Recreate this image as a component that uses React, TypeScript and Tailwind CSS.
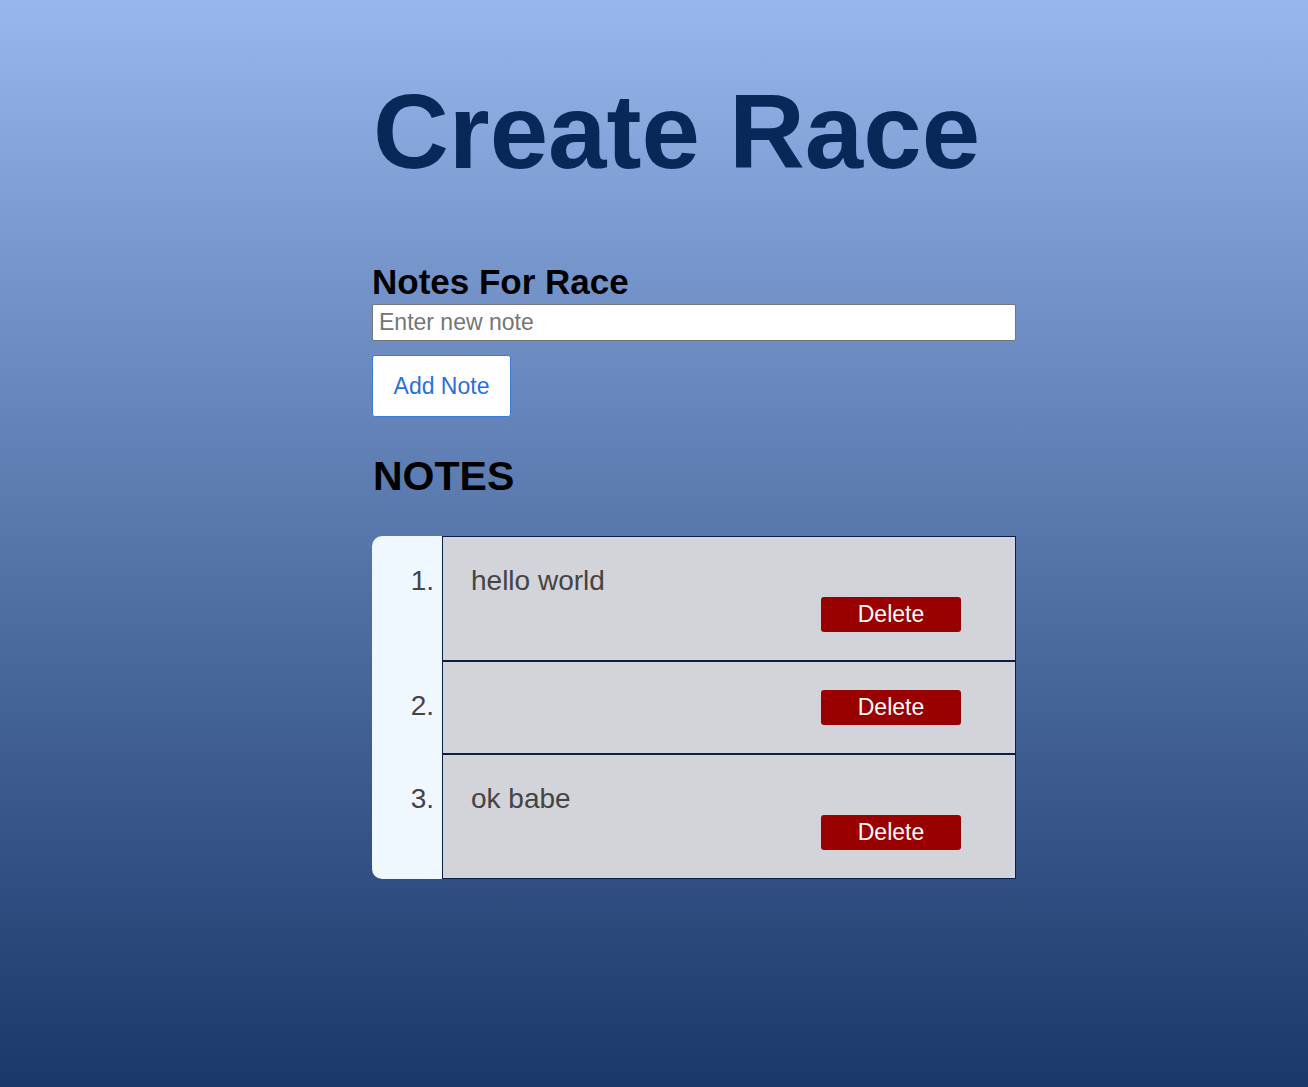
const notes = ["hello world", "", "ok babe"];

export default function App() {
  return (
    <main className="min-h-screen bg-linear-to-b from-[#97b7ed] to-[#1b386a] font-['Liberation_Sans',Arial,sans-serif]">
      <div className="ml-[372px] w-[644px] pt-[79px] pb-10">
        <h1 className="text-[105px] leading-none font-bold text-[#08285a] pl-[1px]">Create Race</h1>

        <h2 className="mt-[80px] text-[35px] leading-none font-bold text-black">Notes For Race</h2>
        <input
          type="text"
          placeholder="Enter new note"
          className="mt-[5px] block h-[37px] w-full rounded-[2px] border border-[#767676] bg-white px-[6px] text-[23px] text-black placeholder:text-[#757575] outline-none"
        />
        <button className="mt-[14px] block h-[62px] w-[139px] rounded-[3px] border border-[#3a7ad9] bg-white text-[23px] text-[#2b6fd7]">
          Add Note
        </button>

        <h2 className="mt-[39px] pl-[1px] text-[41px] leading-none font-bold text-black">NOTES</h2>

        <ol className="mt-[39px] rounded-[10px] bg-[#f0f8ff] text-[28px] text-[#444]">
          {notes.map((note, i) => (
            <li key={i} className="flex">
              <div className="w-[70px] shrink-0 pr-[8px] pt-[29px] text-right leading-[32px]">{i + 1}.</div>
              <div className="flex-1 border border-[#0b1e45] bg-[#d3d4d9] px-[28px] py-[28px]">
                {note && <div className="leading-[32px]">{note}</div>}
                <div className="flex justify-end pr-[26px]">
                  <button className="h-[35px] w-[140px] rounded-[3px] bg-[#990000] text-[23px] leading-none text-white">
                    Delete
                  </button>
                </div>
              </div>
            </li>
          ))}
        </ol>
      </div>
    </main>
  );
}
